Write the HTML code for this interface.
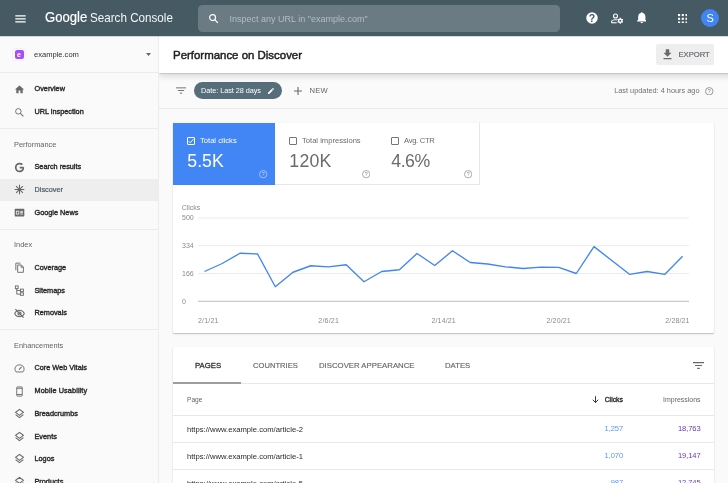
<!DOCTYPE html>
<html lang="en">
<head>
<meta charset="utf-8">
<title>Google Search Console - Performance on Discover</title>
<style>
*{box-sizing:border-box;margin:0;padding:0}
html,body{width:728px;height:483px;overflow:hidden;background:#fafafa;font-family:"Liberation Sans",Arial,sans-serif;color:#212121}
#root{position:absolute;left:0;top:0;width:728px;height:483px;overflow:hidden;background:#fafafa;will-change:transform}
.abs{position:absolute}
.t{position:absolute;white-space:nowrap;line-height:1;transform-origin:0 50%}
#hdr{position:absolute;left:0;top:0;width:728px;height:36px;background:#465a64}
#search{position:absolute;left:198px;top:4.5px;width:361.5px;height:27px;border-radius:4.5px;background:#6a7b83}
#side{position:absolute;left:0;top:36px;width:159px;height:447px;background:#fafafa;border-right:1px solid #ececec}
.nav{position:absolute;left:0;width:158px;height:22.6px}
.nav.sel{background:#eee}
.nav span{position:absolute;left:34.5px;font-size:7.3px;color:#2a2a2a;-webkit-text-stroke:0.38px #2a2a2a;white-space:nowrap;line-height:1}
.nav.sel span{color:#455a64;-webkit-text-stroke:0.2px #455a64}
.nav svg{position:absolute;left:14px;top:50%;margin-top:-5.1px;width:11px;height:11px}
.sec{position:absolute;left:14px;font-size:7.4px;color:#5f6368;white-space:nowrap;line-height:1}
.div{position:absolute;left:0;width:158px;height:1px;background:#ececec}
#tbclip{position:absolute;left:159px;top:36px;width:569px;height:60px;overflow:hidden;pointer-events:none}
#titlebar{position:absolute;left:0;top:0;width:600px;height:36.7px;background:#fff;box-shadow:0 0.5px 1.5px rgba(0,0,0,.27),0 3px 7px rgba(0,0,0,.14)}
#filterbar{position:absolute;left:159px;top:72.5px;width:569px;height:36px;background:#fafafa;border-bottom:1px solid #ececec}
.card{position:absolute;left:173px;width:541px;background:#fff;border-radius:1px;box-shadow:0 1px 1.5px rgba(0,0,0,.24),0 0 1px rgba(0,0,0,.1)}
.tile{position:absolute;top:0;height:62px;width:102px;border-right:1px solid #e6e6e6;border-bottom:1px solid #e6e6e6;background:#fff}
.tile.on{background:#4285f4;border-color:#4285f4}
.tile .cb{position:absolute;left:14px;top:14px;width:8px;height:8px;border:1px solid #757575;border-radius:1px}
.tile.on .cb{border-color:#fff}
.tile .lb{position:absolute;left:27px;top:12.6px;font-size:7.6px;color:#6b6b6b;line-height:9px;white-space:nowrap}
.tile.on .lb{color:#fff}
.tile .v{position:absolute;left:14.3px;top:27.5px;font-size:17.7px;color:#6b6b6b;line-height:20px;white-space:nowrap;letter-spacing:0.25px}
.tile.on .v{color:#fff}
.tile .h{position:absolute;right:6.5px;bottom:5.5px;width:8.4px;height:8.4px}
.row{position:absolute;left:0;width:541px;border-top:1px solid #e8e8e8}
.row .u{top:9.5px;font-size:7.65px;color:#2a2a2a}
.row .n{left:auto;top:9.3px;font-size:7.6px;letter-spacing:-0.12px}
</style>
</head>
<body>
<div id="root">
<!-- HEADER -->
<div id="hdr">
  <svg class="abs" style="left:14.5px;top:14.5px" width="11" height="8" viewBox="0 0 11 8"><path d="M0.3 0.9h10.4M0.3 3.9h10.4M0.3 6.9h10.4" stroke="#fff" stroke-width="1.25" fill="none"/></svg>
  <div class="t" id="logo1" style="left:45px;top:9.800px;font-size:14.200px;color:#fff;-webkit-text-stroke:0.180px #fff;transform:scaleX(0.925)">Google</div>
  <div class="t" id="logo2" style="left:89.700px;top:10.700px;font-size:13.400px;color:#f4f6f7;transform:scaleX(0.870)">Search Console</div>
  <div id="search"></div>
  <svg class="abs" style="left:207.5px;top:13px" width="11" height="11" viewBox="0 0 24 24"><circle cx="10" cy="10" r="6.5" stroke="#fff" stroke-width="2.6" fill="none"/><path d="M15 15l6.5 6.5" stroke="#fff" stroke-width="2.8" fill="none"/></svg>
  <div class="t" style="left:229.5px;top:14.5px;font-size:9px;color:#b4bcc1">Inspect any URL in "example.com"</div>
  <!-- help -->
  <svg class="abs" style="left:585.5px;top:12px" width="12" height="12" viewBox="0 0 24 24"><circle cx="12" cy="12" r="11.5" fill="#fff"/><text x="12" y="19.4" text-anchor="middle" font-family="Liberation Sans, sans-serif" font-weight="bold" font-size="21" fill="#455a64">?</text></svg>
  <!-- user settings -->
  <svg class="abs" style="left:610.5px;top:12.5px" width="12" height="11" viewBox="0 0 24 22"><circle cx="9" cy="6" r="4" stroke="#fff" stroke-width="2.2" fill="none"/><path d="M1.2 19.5v-2c0-2.6 5-4 7.8-4 .8 0 1.800.1 2.700.3" stroke="#fff" stroke-width="2.2" fill="none"/><path d="M1.200 19.500h10" stroke="#fff" stroke-width="2.2"/><circle cx="18.5" cy="15.500" r="3.300" stroke="#fff" stroke-width="2.800" fill="none"/><path d="M18.5 9.300v3M18.5 18.700v3M13.100 12.400l2.600 1.500M21.300 17.100l2.600 1.500M13.100 18.600l2.600-1.500M21.300 13.900l2.600-1.500" stroke="#fff" stroke-width="2.600"/></svg>
  <!-- bell -->
  <svg class="abs" style="left:636.8px;top:12.4px" width="9.6" height="11.6" viewBox="0 0 22 26"><path d="M11 25.500c1.500 0 2.700-1.200 2.700-2.700H8.300c0 1.500 1.200 2.700 2.700 2.700zM19.300 17.500v-6.800c0-4.100-2.200-7.600-6.100-8.500V1.700c0-1.200-1-1.700-2.200-1.700S8.800.5 8.800 1.700v.5C4.900 3.100 2.700 6.600 2.700 10.700v6.800L0 20.200v1.300h22v-1.300z" fill="#fff"/></svg>
  <!-- apps -->
  <svg class="abs" style="left:677.8px;top:13.6px" width="9.6" height="9.6" viewBox="0 0 10 10"><g fill="#fff"><rect x="0" y="0" width="2.200" height="2.200"/><rect x="3.900" y="0" width="2.200" height="2.200"/><rect x="7.800" y="0" width="2.200" height="2.200"/><rect x="0" y="3.900" width="2.200" height="2.200"/><rect x="3.900" y="3.900" width="2.200" height="2.200"/><rect x="7.800" y="3.900" width="2.200" height="2.200"/><rect x="0" y="7.800" width="2.200" height="2.200"/><rect x="3.900" y="7.800" width="2.200" height="2.200"/><rect x="7.800" y="7.800" width="2.200" height="2.200"/></g></svg>
  <div class="abs" style="left:700.6px;top:8.700px;width:18.700px;height:18.700px;border-radius:50%;background:#4184f3"></div>
  <div class="t" style="left:706.400px;top:12.600px;font-size:11px;color:#fff">S</div>
</div>

<div class="abs" style="left:0;top:36px;width:728px;height:1px;background:rgba(69,90,100,.22);z-index:5"></div>

<!-- SIDEBAR -->
<div id="side">
  <div class="abs" style="left:13.3px;top:12.800px;width:11.400px;height:11.400px;border-radius:1.5px;background:#fcfcfc;box-shadow:0 0 0 0.5px rgba(0,0,0,.07)"></div>
  <div class="abs" style="left:14.600px;top:14px;width:9.200px;height:9.200px;border-radius:2px;background:#a94df5"></div>
  <div class="t" style="left:17.100px;top:14.600px;font-size:7px;font-weight:bold;color:#fff">e</div>
  <div class="t" style="left:34px;top:14.500px;font-size:7.550px;color:#303030">example.com</div>
  <svg class="abs" style="left:145.500px;top:17px" width="5" height="3" viewBox="0 0 5 3"><path d="M0 0h5L2.500 3z" fill="#666"/></svg>
  <div class="div" style="top:36px"></div>

  <div class="nav" style="top:41.700px"><svg viewBox="0 0 24 24"><path d="M10 20v-6h4v6h5v-8h3L12 3 2 12h3v8z" fill="#696969"/></svg><span style="top:7.12px">Overview</span></div>
  <div class="nav" style="top:64.300px"><svg viewBox="0 0 24 24"><circle cx="9.500" cy="9.500" r="6" stroke="#696969" stroke-width="2" fill="none"/><path d="M14 14l6.500 6.500" stroke="#696969" stroke-width="2.200"/></svg><span style="top:7.52px">URL inspection</span></div>
  <div class="div" style="top:92px"></div>
  <div class="sec" style="top:104.500px">Performance</div>
  <div class="nav" style="top:119.300px"><svg viewBox="0 0 24 24"><path d="M21 12.200H12.300M20.300 12.200c.3 5-3.300 8.400-8 8.400-4.700 0-8.500-3.800-8.500-8.600s3.800-8.600 8.500-8.600c2.400 0 4.400.9 5.900 2.300" stroke="#696969" stroke-width="3.800" fill="none"/></svg><span style="top:7.52px">Search results</span></div>
  <div class="nav sel" style="top:142.5px;height:22.3px"><svg style="margin-top:-5.7px" viewBox="0 0 24 24"><path d="M12 1.500v21M1.500 12h21M4.600 4.600l14.800 14.800M19.400 4.600L4.600 19.400" stroke="#666" stroke-width="2.300" fill="none"/></svg><span style="top:7.32px">Discover</span></div>
  <div class="nav" style="top:164.700px"><svg viewBox="0 0 24 24"><rect x="1.500" y="4" width="21" height="16.500" rx="1.500" fill="#696969"/><rect x="5" y="9" width="5.500" height="6.500" fill="none" stroke="#fafafa" stroke-width="1.600"/><rect x="13.500" y="8.500" width="6" height="1.700" fill="#fafafa"/><rect x="13.500" y="11.500" width="6" height="1.700" fill="#fafafa"/><rect x="13.500" y="14.500" width="6" height="1.700" fill="#fafafa"/></svg><span style="top:8.12px">Google News</span></div>
  <div class="div" style="top:192.500px"></div>
  <div class="sec" style="top:205px">Index</div>
  <div class="nav" style="top:220px"><svg viewBox="0 0 24 24"><path d="M8 6.500h8l4.500 4.500v11.500H8z" stroke="#696969" stroke-width="2" fill="none"/><path d="M15.500 6.500v5h5M4 18V2.500h10" stroke="#696969" stroke-width="2" fill="none"/></svg><span style="top:7.82px">Coverage</span></div>
  <div class="nav" style="top:242.700px"><svg viewBox="0 0 24 24"><rect x="3" y="2" width="6" height="6" stroke="#696969" stroke-width="2" fill="none"/><rect x="14" y="9" width="6.500" height="5.500" stroke="#696969" stroke-width="2" fill="none"/><rect x="14" y="17" width="6.500" height="5.500" stroke="#696969" stroke-width="2" fill="none"/><path d="M6 8v12h8M6 12h8" stroke="#696969" stroke-width="2" fill="none"/></svg><span style="top:8.12px">Sitemaps</span></div>
  <div class="nav" style="top:265.300px"><svg viewBox="0 0 24 24"><path d="M1.500 12c2-4.500 6-7 10.500-7s8.500 2.500 10.500 7c-2 4.500-6 7-10.500 7S3.500 16.500 1.500 12z" stroke="#696969" stroke-width="2.300" fill="none"/><circle cx="12" cy="12" r="3.300" stroke="#696969" stroke-width="2.600" fill="none"/><path d="M3 2.500l18 18.500" stroke="#696969" stroke-width="2.400"/></svg><span style="top:7.52px">Removals</span></div>
  <div class="div" style="top:293px"></div>
  <div class="sec" style="top:305.500px">Enhancements</div>
  <div class="nav" style="top:320.700px"><svg viewBox="0 0 24 24"><path d="M4.500 19.500C3 17.800 2 15.500 2 13 2 7.500 6.500 4 12 4s10 3.500 10 9c0 2.500-1 4.800-2.500 6.500z" stroke="#696969" stroke-width="2" fill="none"/><path d="M11 14.500l5.500-6" stroke="#696969" stroke-width="2.200"/></svg><span style="top:7.12px">Core Web Vitals</span></div>
  <div class="nav" style="top:343.300px"><svg viewBox="0 0 24 24"><rect x="6" y="2" width="12" height="20" rx="1.500" stroke="#696969" stroke-width="2" fill="none"/><path d="M6 5h12M6 18.500h12" stroke="#696969" stroke-width="2"/></svg><span style="top:7.52px;letter-spacing:0.1px">Mobile Usability</span></div>
  <div class="nav" style="top:366px"><svg viewBox="0 0 24 24"><path d="M12 3l8.500 6.500L12 16 3.500 9.500z" stroke="#666" stroke-width="2.400" fill="none"/><path d="M3.500 14.500L12 21l8.500-6.500" stroke="#666" stroke-width="2.400" fill="none"/></svg><span style="top:7.82px">Breadcrumbs</span></div>
  <div class="nav" style="top:388.600px"><svg viewBox="0 0 24 24"><path d="M12 3l8.500 6.500L12 16 3.500 9.500z" stroke="#666" stroke-width="2.400" fill="none"/><path d="M3.500 14.500L12 21l8.500-6.500" stroke="#666" stroke-width="2.400" fill="none"/></svg><span style="top:8.22px">Events</span></div>
  <div class="nav" style="top:411.200px"><svg viewBox="0 0 24 24"><path d="M12 3l8.500 6.500L12 16 3.500 9.500z" stroke="#666" stroke-width="2.400" fill="none"/><path d="M3.500 14.500L12 21l8.500-6.500" stroke="#666" stroke-width="2.400" fill="none"/></svg><span style="top:7.62px">Logos</span></div>
  <div class="nav" style="top:433.800px"><svg viewBox="0 0 24 24"><path d="M12 3l8.500 6.500L12 16 3.500 9.500z" stroke="#666" stroke-width="2.400" fill="none"/><path d="M3.500 14.500L12 21l8.500-6.500" stroke="#666" stroke-width="2.400" fill="none"/></svg><span style="top:8.02px">Products</span></div>
</div>

<!-- FILTER BAR -->
<div id="filterbar">
  <svg class="abs" style="left:16.500px;top:14.800px" width="10" height="7" viewBox="0 0 11 7"><path d="M0 .6h11M2 3.500h7M4.200 6.400h2.600" stroke="#757575" stroke-width="1.100" fill="none"/></svg>
  <div class="abs" style="left:35.300px;top:9.300px;width:88px;height:17.700px;border-radius:9px;background:#566e7a"></div>
  <div class="t" style="left:42px;top:14.400px;font-size:7.300px;color:#fff;letter-spacing:-0.05px">Date: Last 28 days</div>
  <svg class="abs" style="left:108px;top:14.300px" width="8" height="8" viewBox="0 0 24 24"><path d="M3 17.250V21h3.750L17.800 9.940l-3.750-3.750zM20.700 7.040a1 1 0 0 0 0-1.410l-2.340-2.340a1 1 0 0 0-1.410 0l-1.830 1.830 3.750 3.750z" fill="#fff"/></svg>
  <svg class="abs" style="left:135px;top:14px" width="8" height="8" viewBox="0 0 8 8"><path d="M4 0v8M0 4h8" stroke="#696969" stroke-width="1.100"/></svg>
  <div class="t" style="left:150.500px;top:14.300px;font-size:7.600px;color:#5f6368;letter-spacing:0.2px">NEW</div>
  <div class="t" style="right:28.500px;left:auto;top:14.500px;font-size:7.350px;color:#707070">Last updated: 4 hours ago</div>
  <svg class="abs" style="left:546px;top:14px" width="8.500" height="8.500" viewBox="0 0 24 24"><circle cx="12" cy="12" r="10.500" stroke="#757575" stroke-width="2" fill="none"/><text x="12" y="17.500" text-anchor="middle" font-family="Liberation Sans, sans-serif" font-size="15" fill="#757575">?</text></svg>
</div>

<!-- TITLE BAR -->
<div id="tbclip"><div id="titlebar">
  <div class="t" style="left:14px;top:13.7px;font-size:11.45px;color:#202124;-webkit-text-stroke:0.45px #202124">Performance on Discover</div>
  <div class="abs" style="left:496.5px;top:8px;width:58.5px;height:21px;border-radius:2px;background:#eee"></div>
  <svg class="abs" style="left:503.7px;top:13.4px" width="9" height="10.5" viewBox="0 0 18 20"><path d="M5.500 0h7v7H17l-8 8-8-8h4.500zM1 17.500h16V20H1z" fill="#696969"/></svg>
  <div class="t" style="left:519.500px;top:14.900px;font-size:7.650px;color:#5f6368;-webkit-text-stroke:0.150px #5f6368">EXPORT</div>
</div></div>

<!-- CARD 1 -->
<div class="card" style="top:123px;height:210px">
  <div class="tile on" style="left:0;width:102px"><div class="cb"></div><svg class="abs" style="left:15px;top:15px" width="6" height="6" viewBox="0 0 6 6"><path d="M.7 3.200l1.600 1.600L5.400 1.200" stroke="#fff" stroke-width="1" fill="none"/></svg><div class="lb">Total clicks</div><div class="v" style="letter-spacing:0">5.5K</div>
    <svg class="h" viewBox="0 0 24 24"><circle cx="12" cy="12" r="10.500" stroke="#c6dafc" stroke-width="2" fill="none"/><text x="12" y="17.500" text-anchor="middle" font-family="Liberation Sans, sans-serif" font-size="15" fill="#c6dafc">?</text></svg></div>
  <div class="tile" style="left:102px;width:102.5px"><div class="cb"></div><div class="lb">Total impressions</div><div class="v">120K</div>
    <svg class="h" viewBox="0 0 24 24"><circle cx="12" cy="12" r="10.500" stroke="#8a8a8a" stroke-width="2" fill="none"/><text x="12" y="17.500" text-anchor="middle" font-family="Liberation Sans, sans-serif" font-size="15" fill="#8a8a8a">?</text></svg></div>
  <div class="tile" style="left:204px;width:102.5px"><div class="cb"></div><div class="lb" style="letter-spacing:-0.28px">Avg. CTR</div><div class="v" style="letter-spacing:-0.5px">4.6%</div>
    <svg class="h" viewBox="0 0 24 24"><circle cx="12" cy="12" r="10.500" stroke="#8a8a8a" stroke-width="2" fill="none"/><text x="12" y="17.500" text-anchor="middle" font-family="Liberation Sans, sans-serif" font-size="15" fill="#8a8a8a">?</text></svg></div>

  <svg class="abs" style="left:0;top:62px" width="541" height="148" viewBox="173 184.5 541 148">
    <g font-family="Liberation Sans, sans-serif" font-size="7" fill="#8a8a8a">
      <text x="181.700" y="209.800">Clicks</text>
      <text x="182" y="219.800">500</text>
      <text x="182" y="247.500">334</text>
      <text x="182" y="275.500">166</text>
      <text x="182" y="303.200">0</text>
      <text x="198" y="322.500" textLength="20.5">2/1/21</text>
      <text x="318.300" y="322.500" textLength="20.5">2/6/21</text>
      <text x="431.500" y="322.500" textLength="24.2">2/14/21</text>
      <text x="546.500" y="322.500" textLength="24.2">2/20/21</text>
      <text x="665.300" y="322.500" textLength="24.2">2/28/21</text>
    </g>
    <path d="M198 217.500H689M198 245.200H689M198 273H689" stroke="#ececec" stroke-width="1" fill="none"/>
    <path d="M198 300.800H689" stroke="#bdbdbd" stroke-width="1" fill="none"/>
    <polyline fill="none" stroke="#4285f4" stroke-width="1.350" stroke-linejoin="round" points="204.500,271 222.200,263 240,252.750 257.600,253.500 275.300,286.250 293,271.750 310.750,265.250 328.500,266.300 346.200,264.250 364,281.250 381.700,271 399.400,269.250 417,253 434.750,265 452.500,250.250 470.200,262 487.700,263.500 505.500,266.300 523.200,268 541,266.600 558.700,266.900 576.300,273 594,246.100 611.800,260 629.500,273.800 647.200,271 664.900,273.800 682.600,255.800"/>
  </svg>
</div>

<!-- CARD 2 -->
<div class="card" style="top:347px;height:150px">
  <div class="t" style="left:21.5px;top:15.100px;font-size:8px;color:#2a2a2a;-webkit-text-stroke:0.270px #2a2a2a;transform:scaleX(0.965)">PAGES</div>
  <div class="t" style="left:79.8px;top:15.100px;font-size:8px;color:#666;-webkit-text-stroke:0.150px #666;transform:scaleX(0.951)">COUNTRIES</div>
  <div class="t" style="left:145.8px;top:15.100px;font-size:8px;color:#666;-webkit-text-stroke:0.150px #666;transform:scaleX(0.972)">DISCOVER APPEARANCE</div>
  <div class="t" style="left:272px;top:15.100px;font-size:8px;color:#666;-webkit-text-stroke:0.150px #666;transform:scaleX(0.970)">DATES</div>
  <svg class="abs" style="left:520px;top:15px" width="11" height="7" viewBox="0 0 11 7"><path d="M0 .6h11M2 3.500h7M4.200 6.400h2.600" stroke="#696969" stroke-width="1.100" fill="none"/></svg>
  <div class="abs" style="left:0;top:36px;width:541px;height:1px;background:#e8e8e8"></div>
  <div class="abs" style="left:0;top:35px;width:68px;height:2px;background:#9e9e9e"></div>

  <div class="t" style="left:14px;top:49.800px;font-size:6.600px;color:#666">Page</div>
  <svg class="abs" style="left:419.300px;top:49.300px" width="7" height="7.500" viewBox="0 0 14 15"><path d="M7 0.500v12.500M1.500 7.500l5.500 5.500L12.500 7.500" stroke="#2a2a2a" stroke-width="1.900" fill="none"/></svg>
  <div class="t" style="right:91px;left:auto;top:49.600px;font-size:6.900px;color:#2a2a2a;-webkit-text-stroke:0.350px #2a2a2a">Clicks</div>
  <div class="t" style="right:13.500px;left:auto;top:49.600px;font-size:6.950px;color:#666">Impressions</div>

  <div class="row" style="top:68px;height:27px"><div class="t u" style="left:14px">https://www.example.com/article-2</div><div class="t n" style="right:91px;color:#5a95f5">1,257</div><div class="t n" style="right:13.500px;color:#673ab7">18,763</div></div>
  <div class="row" style="top:95px;height:27px"><div class="t u" style="left:14px">https://www.example.com/article-1</div><div class="t n" style="right:91px;color:#5a95f5">1,070</div><div class="t n" style="right:13.500px;color:#673ab7">19,147</div></div>
  <div class="row" style="top:122px;height:27px"><div class="t u" style="left:14px">https://www.example.com/article-5</div><div class="t n" style="right:91px;color:#5a95f5">987</div><div class="t n" style="right:13.500px;color:#673ab7">12,745</div></div>
</div>
</div>
</body>
</html>
